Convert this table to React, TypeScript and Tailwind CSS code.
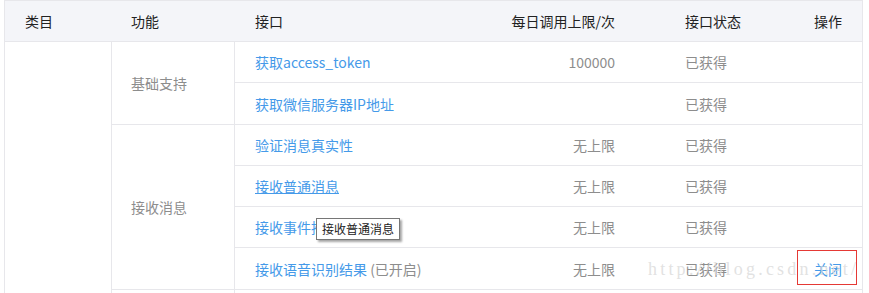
import React from "react";

const font = { fontFamily: '"Noto Sans CJK SC", "Noto Sans", sans-serif' };

type Row = { name: string; extra?: string; limit: string; status: string; action?: string; hover?: boolean };
type Group = { title: string; rows: Row[] };

const groups: Group[] = [
  {
    title: "基础支持",
    rows: [
      { name: "获取access_token", limit: "100000", status: "已获得" },
      { name: "获取微信服务器IP地址", limit: "", status: "已获得" },
    ],
  },
  {
    title: "接收消息",
    rows: [
      { name: "验证消息真实性", limit: "无上限", status: "已获得" },
      { name: "接收普通消息", limit: "无上限", status: "已获得", hover: true },
      { name: "接收事件推送", limit: "无上限", status: "已获得" },
      { name: "接收语音识别结果", extra: " (已开启)", limit: "无上限", status: "已获得", action: "关闭" },
    ],
  },
];

function IfaceRow({ r, last }: { r: Row; last: boolean }) {
  return (
    <div className={`flex h-[41px] items-center text-[14px] ${last ? "" : "border-b border-[#e7e7eb]"}`}>
      <div className="w-[260px] pl-[20px] whitespace-nowrap">
        <span className={`text-[#459ae9] ${r.hover ? "underline" : ""}`}>{r.name}</span>
        {r.extra && <span className="text-[#8d8d8d]">{r.extra}</span>}
      </div>
      <div className="w-[120px] text-right text-[#8d8d8d]">{r.limit}</div>
      <div className="w-[140px] pl-[70px] text-[#8d8d8d] whitespace-nowrap">{r.status}</div>
      <div className="flex-1 pr-[20px] text-right text-[#459ae9]">{r.action ?? ""}</div>
    </div>
  );
}

export default function App() {
  return (
    <div className="relative w-[869px] bg-white leading-[20px]" style={font}>
      <div className="ml-[4px] w-[859px] border-x border-[#e7e7eb]">
        {/* header */}
        <div className="flex h-[42px] items-center border-y border-[#e7e7eb] bg-[#f4f5f9] text-[14px] text-[#222]">
          <div className="w-[107px] pl-[20px]">类目</div>
          <div className="w-[123px] pl-[19px]">功能</div>
          <div className="w-[260px] pl-[20px]">接口</div>
          <div className="w-[120px] text-right">每日调用上限/次</div>
          <div className="w-[140px] pl-[70px]">接口状态</div>
          <div className="flex-1 pr-[20px] text-right">操作</div>
        </div>
        {/* body */}
        <div className="flex">
          <div className="w-[107px] border-r border-[#e7e7eb]" />
          <div className="flex-1">
            {groups.map((g) => (
              <div key={g.title} className="flex border-b border-[#e7e7eb]">
                <div className="flex w-[123px] items-center border-r border-[#e7e7eb] pl-[19px] text-[14px] text-[#8d8d8d]">
                  {g.title}
                </div>
                <div className="flex-1">
                  {g.rows.map((r, i) => (
                    <IfaceRow key={r.name} r={r} last={i === g.rows.length - 1} />
                  ))}
                </div>
              </div>
            ))}
            <div className="flex h-[41px]">
              <div className="w-[123px] border-r border-[#e7e7eb]" />
              <div className="flex-1" />
            </div>
          </div>
        </div>
      </div>

      {/* watermark */}
      <div
        className="pointer-events-none absolute left-[648px] top-[258px] whitespace-nowrap text-[18px] leading-[22px] tracking-[3.2px] text-[#dadada]/80"
        style={{ fontFamily: '"Liberation Serif", serif' }}
      >
        http://blog.csdn.net/
      </div>

      {/* annotation box */}
      <div className="pointer-events-none absolute left-[797px] top-[250px] h-[35px] w-[60px] border border-[#e53935]" />

      {/* tooltip */}
      <div className="absolute left-[316px] top-[218px] border border-[#767676] bg-white px-[5px] py-[1px] text-[12px] leading-[18px] text-[#222] shadow-[2px_2px_2px_rgba(0,0,0,0.35)] whitespace-nowrap">
        接收普通消息
      </div>
    </div>
  );
}
